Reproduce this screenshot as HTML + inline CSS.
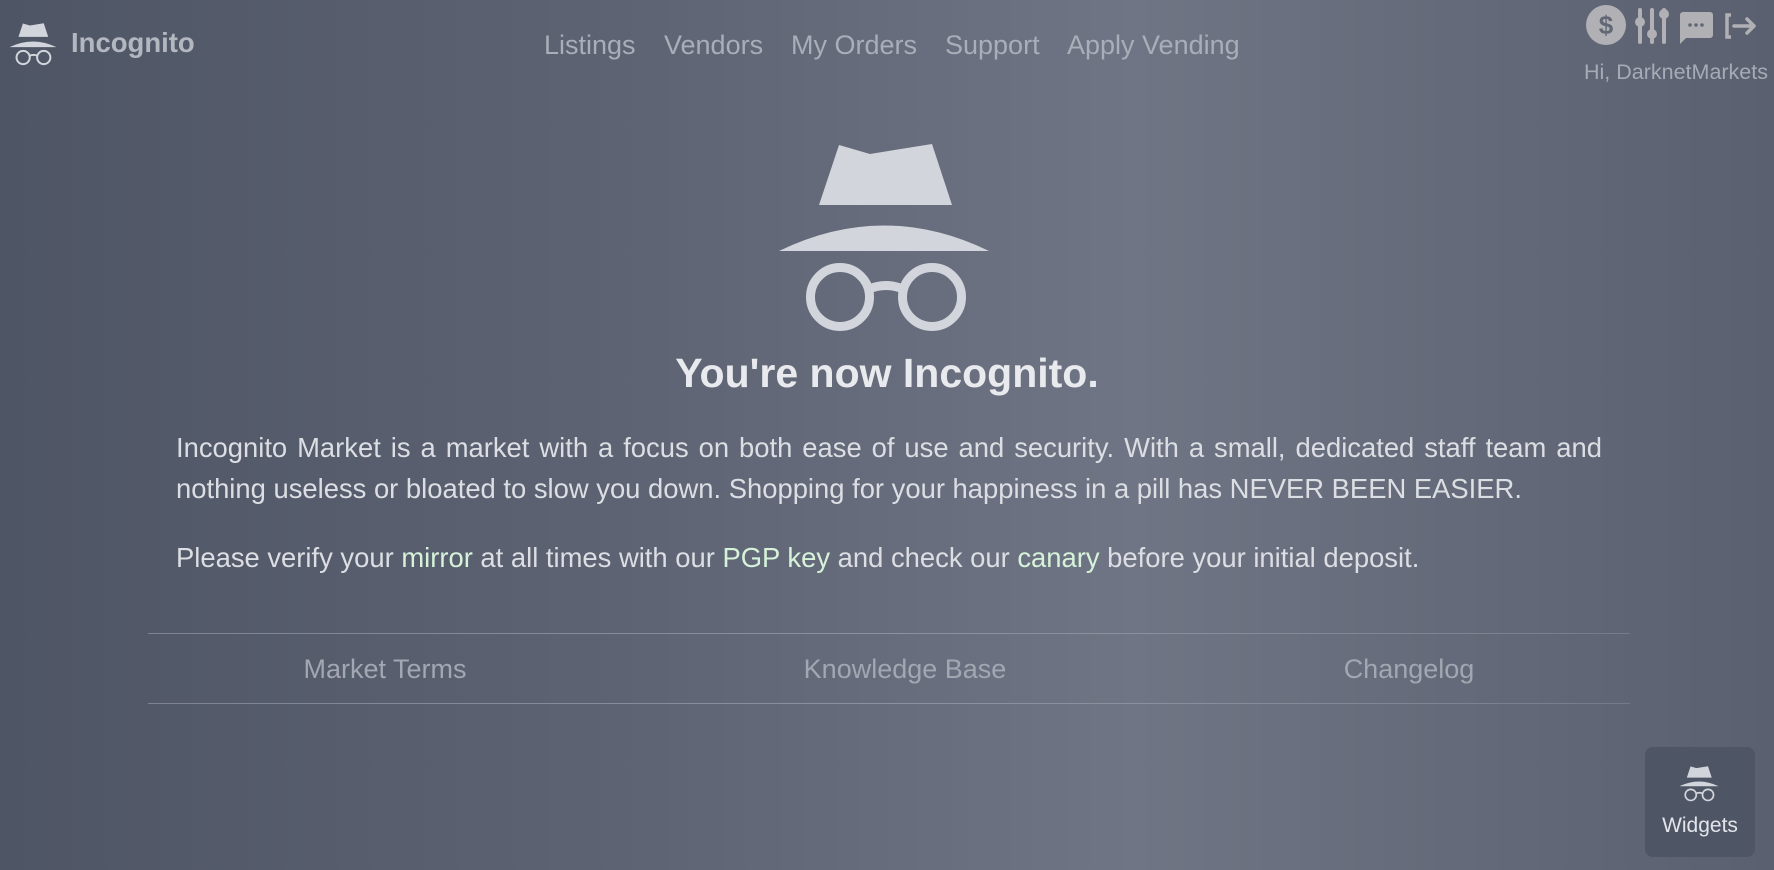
<!DOCTYPE html>
<html><head><meta charset="utf-8"><style>
*{margin:0;padding:0;box-sizing:border-box}
html,body{width:1774px;height:870px;overflow:hidden}
body{background:linear-gradient(90deg,#4e5565 0%,#5d6373 35%,#6f7584 64%,#646a79 82%,#5a6070 100%);font-family:"Liberation Sans",sans-serif;position:relative}
.abs{position:absolute;white-space:nowrap}
.nav a{position:absolute;top:30px;font-size:27px;color:#a9aeb8;text-decoration:none}
p.t{position:absolute;left:176px;width:1426px;font-size:27.4px;line-height:41px;color:#dcdee3;text-align:justify}
.g{color:#d6f3da}
.line{position:absolute;left:148px;width:1482px;height:1px;background:linear-gradient(90deg,rgba(170,175,185,.5),rgba(170,175,185,.55) 50%,rgba(170,175,185,.3))}
.f{position:absolute;top:654px;font-size:27px;color:#a2a7b2;transform:translateX(-50%)}
</style></head><body>
<svg width="0" height="0" style="position:absolute"><defs>
<symbol id="inc" viewBox="778 143 212 192">
<path d="M839 145 L870 154 L932 144 L952 205 L819 205 Z" fill="#d2d5dc"/>
<path d="M779 251 Q884 200 989 251 Z" fill="#d2d5dc"/>
<circle cx="840" cy="297" r="29.5" fill="none" stroke="#d2d5dc" stroke-width="9"/>
<circle cx="932" cy="297" r="29.5" fill="none" stroke="#d2d5dc" stroke-width="9"/>
<path d="M869 289 Q886 282 903 289" fill="none" stroke="#d2d5dc" stroke-width="9"/>
</symbol></defs></svg>
<svg class="abs" style="left:9px;top:23px" width="48" height="43"><use href="#inc"/></svg>
<div class="abs" style="left:71px;top:27px;font-size:27.5px;font-weight:bold;color:#b3b7c0">Incognito</div>
<div class="nav"><a style="left:544px">Listings</a><a style="left:664px">Vendors</a><a style="left:791px">My Orders</a><a style="left:945px">Support</a><a style="left:1067px">Apply Vending</a></div>
<svg class="abs" style="left:1584px;top:4px" width="180" height="44" viewBox="0 0 180 44" fill="#b1b1b5">
<circle cx="22" cy="21" r="20"/><text x="22" y="30" font-size="26" font-weight="bold" text-anchor="middle" fill="#626774" font-family="Liberation Sans">$</text>
<g stroke="#b1b1b5" stroke-width="4" stroke-linecap="round"><line x1="56" y1="6" x2="56" y2="38"/><line x1="68" y1="6" x2="68" y2="38"/><line x1="80" y1="6" x2="80" y2="38"/></g>
<circle cx="56" cy="18" r="5"/><circle cx="68" cy="30" r="5"/><circle cx="80" cy="10" r="5"/>
<path d="M96 8 h30 a3 3 0 0 1 3 3 v20 a3 3 0 0 1 -3 3 h-24 l-6 6 v-29 a3 3 0 0 1 3 -3z"/>
<circle cx="106" cy="21" r="1.8" fill="#626774"/><circle cx="112" cy="21" r="1.8" fill="#626774"/><circle cx="118" cy="21" r="1.8" fill="#626774"/>
<path d="M147 11 h-4 v22 h4" fill="none" stroke="#b1b1b5" stroke-width="3.5"/>
<path d="M150 22 h20 M163 15 l7 7 l-7 7" fill="none" stroke="#b1b1b5" stroke-width="3.5" stroke-linecap="round" stroke-linejoin="round"/>
</svg>
<div class="abs" style="left:1584px;top:60px;font-size:21.5px;color:#a6abb5">Hi, DarknetMarkets</div>
<svg class="abs" style="left:778px;top:143px" width="212" height="192" viewBox="0 0 212 192"><use href="#inc" width="212" height="192"/></svg>
<div class="abs" style="left:0;width:1774px;text-align:center;top:350px;font-size:41px;font-weight:bold;color:#e9eaee">You're now Incognito.</div>
<p class="t" style="top:427px">Incognito Market is a market with a focus on both ease of use and security. With a small, dedicated staff team and nothing useless or bloated to slow you down. Shopping for your happiness in a pill has NEVER BEEN EASIER.</p>
<p class="t" style="top:537px;text-align:left">Please verify your <span class="g">mirror</span> at all times with our <span class="g">PGP key</span> and check our <span class="g">canary</span> before your initial deposit.</p>
<div class="line" style="top:633px"></div>
<div class="line" style="top:703px"></div>
<div class="f" style="left:385px">Market Terms</div>
<div class="f" style="left:905px">Knowledge Base</div>
<div class="f" style="left:1409px">Changelog</div>
<div class="abs" style="left:1645px;top:747px;width:110px;height:110px;border-radius:8px;background:#4e5564">
<svg style="position:absolute;left:34px;top:19px" width="40" height="36"><use href="#inc"/></svg>
<div style="position:absolute;top:67px;width:110px;text-align:center;font-size:21px;color:#e3e5ea">Widgets</div>
</div>
</body></html>
